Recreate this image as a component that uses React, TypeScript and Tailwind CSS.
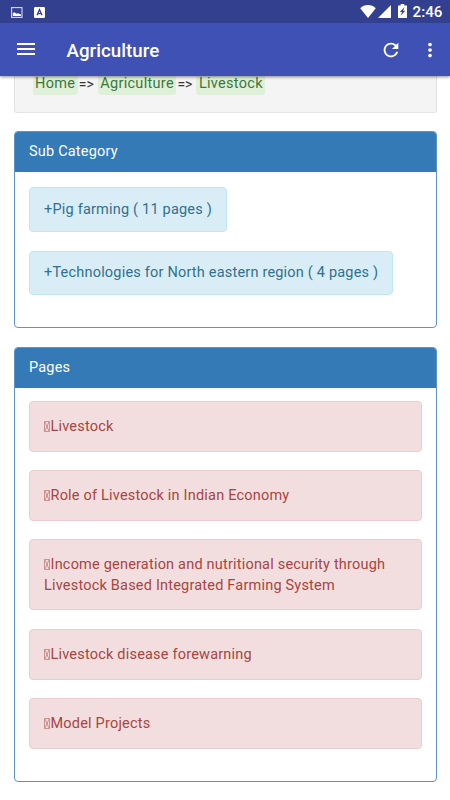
import React from 'react';
import { MdMenu, MdMoreVert, MdRefresh } from 'react-icons/md';

interface SubCategory {
  name: string;
  pages: number;
}

const breadcrumbs = ['Home', 'Agriculture', 'Livestock'];

const subCategories: SubCategory[] = [
  { name: 'Pig farming', pages: 11 },
  { name: 'Technologies for North eastern region', pages: 4 },
];

const pages = [
  'Livestock',
  'Role of Livestock in Indian Economy',
  'Income generation and nutritional security through Livestock Based Integrated Farming System',
  'Livestock disease forewarning',
  'Model Projects',
];

const StatusBar: React.FC = () => (
  <div className="flex h-[23px] items-center bg-[#333f8f] pl-[11px] pr-[7.500px] text-white">
    <svg className="mt-px h-[11px] w-[12px]" viewBox="0 0 12 11">
      <rect x="0.6" y="0.6" width="10.4" height="9.8" fill="none" stroke="#d5d9f0" strokeWidth="1.1" />
      <path d="M1.8 9V6l1.7-.8 2 1.6 1.5-.6L10 7.5V9z" fill="#fff" />
    </svg>
    <svg className="ml-[11px] mt-px h-[11px] w-[11px]" viewBox="0 0 11 11">
      <rect width="11" height="11" rx="1.2" fill="#fff" />
      <path d="M3 8.3 5.5 2.7 8 8.3M3.9 6.7h3.2" fill="none" stroke="#333f8f" strokeWidth="1.3" />
    </svg>
    <div className="ml-auto flex items-center">
      <svg className="h-[13px] w-[16px]" viewBox="0 0 16 13">
        <path d="M8 13 .2 3.2C2.3 1.2 5 0 8 0s5.7 1.2 7.8 3.2z" fill="#fff" />
      </svg>
      <svg className="ml-[2px] h-[13px] w-[13px]" viewBox="0 0 13 13">
        <path d="M13 0v13H0z" fill="#fff" />
      </svg>
      <svg className="ml-[7px] -mt-px h-[14px] w-[9px]" viewBox="0 0 9 14">
        <path d="M2.7 0h3.6v1.4H9V14H0V1.4h2.7z" fill="#fff" />
        <path d="M6.6 3 1.8 8h2.3l-1.5 3.7L7.3 6.700H5z" fill="#333f8f" />
      </svg>
      <span className="ml-[6px] mt-[2px] text-[15.200px] leading-none font-medium tracking-normal">2:46</span>
    </div>
  </div>
);

const Toolbar: React.FC = () => (
  <div className="flex h-[53px] items-center bg-[#4051b5] text-white">
    <MdMenu className="ml-[14px] -mt-[2px] h-6 w-6" />
    <h1 className="ml-[28.500px] mt-[3px] text-[18.700px] font-medium tracking-[0.040px]">Agriculture</h1>
    <MdRefresh className="ml-auto h-[22px] w-[22px]" />
    <MdMoreVert className="ml-[17px] mr-[9px] h-[22px] w-[22px]" />
  </div>
);

// The system font has no glyph for the bullet, so it shows as an empty box
const MissingGlyph: React.FC = () => (
  <svg className="mr-[0.500px] inline-block h-[11px] w-[6px] align-[-1px]" viewBox="0 0 6 11">
    <path d="M.5.5h5v10h-5zM1 1l4 9M5 1 1 10" fill="none" stroke="currentColor" strokeWidth="0.5" />
  </svg>
);

const Panel: React.FC<{ title: string; className: string; children: React.ReactNode }> = ({
  title,
  className,
  children,
}) => (
  <section className={`overflow-hidden rounded-[4px] border border-[#5f93c4] bg-white ${className}`}>
    <h2 className="flex h-[40px] items-center bg-[#337ab7] px-[14px] pt-px text-[14.500px] text-white">{title}</h2>
    {children}
  </section>
);

export default function App() {
  return (
    <div className="h-[800px] overflow-hidden bg-white font-[Roboto,'Liberation_Sans',sans-serif] text-[14.500px] leading-[20.500px] tracking-[0.200px]">
      <header className="relative shadow-[0_1px_3px_rgba(0,0,0,0.45)]">
        <StatusBar />
        <Toolbar />
      </header>

      <main className="pl-[14px] pr-[13px]">
        <nav className="flex h-[36.500px] items-start rounded-b-[3px] border border-t-0 border-[#e3e3e3] bg-[#f4f4f4] pl-[17.500px] text-[#333]">
          {breadcrumbs.map((crumb, index) => (
            <React.Fragment key={crumb}>
              {index > 0 && (
                <span className="-mt-[2px] w-[20px] pl-px text-[14px] tracking-normal">=&gt;</span>
              )}
              <span className="h-[19px] rounded-b-[3px] bg-[#dff0d8] px-[2.500px] text-[#3c763d] tracking-[0.300px]">
                <span className="-mt-[2px] block">{crumb}</span>
              </span>
            </React.Fragment>
          ))}
        </nav>

        <Panel title="Sub Category" className="mt-[18.500px] h-[197px]">
          <div className="flex flex-col items-start gap-[19px] px-[14px] pt-[15px]">
            {subCategories.map((category) => (
              <div
                key={category.name}
                className="flex h-[44.500px] items-center rounded-[4px] border border-[#bce8f1] bg-[#d9edf7] px-[14px] pt-px whitespace-nowrap text-[#31708f]"
              >
                +{category.name} ( {category.pages} pages )
              </div>
            ))}
          </div>
        </Panel>

        <Panel title="Pages" className="mt-[18.500px] h-[435.500px]">
          <div className="flex flex-col gap-[18.500px] px-[14px] pt-[13.700px]">
            {pages.map((page) => (
              <div
                key={page}
                className="rounded-[4px] border border-[#ebccd1] bg-[#f2dede] px-[14px] pt-[14.900px] pb-[13.200px] text-[#a94442]"
              >
                <MissingGlyph />
                {page}
              </div>
            ))}
          </div>
        </Panel>
      </main>
    </div>
  );
}
